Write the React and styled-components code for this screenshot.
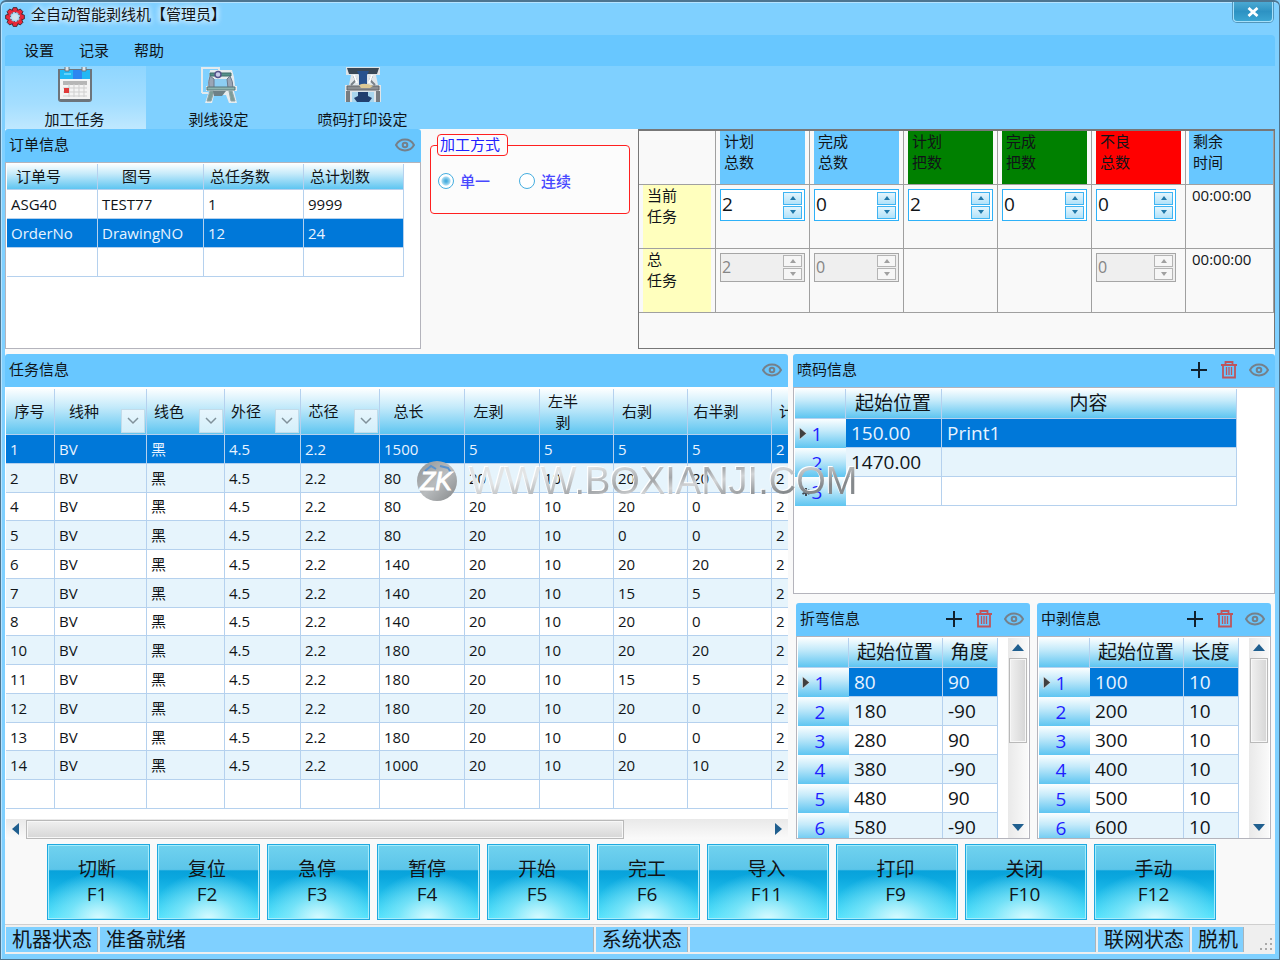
import React from "react";
import styled, { createGlobalStyle, css } from "styled-components";

const GlobalStyle = createGlobalStyle`
  * {
    box-sizing: border-box;
  }
  body {
    margin: 0;
    background: #7fd0ff;
    color: #101418;
    font-family: "Open Sans", "Noto Sans CJK SC", sans-serif;
    font-size: 15px;
    line-height: 20px;
  }
  button, input {
    font-family: inherit;
    color: inherit;
  }
`;

const Window = styled.div`
  min-height: 100vh;
  display: flex;
  flex-direction: column;
  padding: 0 4px 5px;
  background: #7fd0ff;
  border: 1px solid #4d7590;
  border-top: 2px solid #4d7590;
  border-radius: 6px 6px 0 0;
  box-shadow: inset 1px 1px 0 #b5e3ff;
  overflow: hidden;
  position: relative;
`;

const TitleBar = styled.header`
  height: 33px;
  display: flex;
  align-items: flex-start;
`;

const TitleLogo = styled.span`
  display: flex;
  padding-top: 5px;
`;

const AppTitle = styled.h1`
  flex: 1;
  margin: 2px 0 0 6px;
  font-size: 15px;
  font-weight: 400;
  text-shadow: 0 0 6px #fff, 0 0 6px #fff;
`;

const CloseButton = styled.button`
  width: 40px;
  height: 20px;
  margin-right: 2px;
  padding: 0;
  display: flex;
  align-items: center;
  justify-content: center;
  border: 1px solid #a5e0fa;
  border-top: 0;
  border-radius: 0 0 4px 4px;
  background: linear-gradient(#4ba9d2, #2d92c3 50%, #3ba5d2);
  box-shadow: 0 0 0 1px #5295ba;
`;

const MenuBar = styled.nav`
  height: 31px;
  display: flex;
  align-items: center;
  gap: 25px;
  padding: 0 0 2px 19px;
  background: #68c7ff;
  border-radius: 4px 4px 0 0;
`;

const MenuItem = styled.button`
  padding: 0;
  border: 0;
  background: none;
  font-size: 15px;
  line-height: 20px;
`;

const ToolBar = styled.div`
  height: 63px;
  display: flex;
  gap: 3px;
  background: #7fd0ff;
`;

const Tool = styled.button`
  width: 141px;
  padding: 1px 2px 0 0;
  display: flex;
  flex-direction: column;
  align-items: center;
  gap: 6px;
  border: 0;
  font-size: 15px;
  line-height: 20px;
  background: ${(props) =>
    props.$active ? "linear-gradient(#8fd6ff, #a4deff 60%, #bfe8ff)" : "none"};
`;

const Main = styled.main`
  flex: 1;
  display: flex;
  flex-direction: column;
  gap: 5px;
  background: #f9f9f9;
  padding-bottom: 3px;
`;

const TopRow = styled.div`
  height: 220px;
  display: grid;
  grid-template-columns: minmax(0, 416fr) minmax(0, 217fr) minmax(0, 637fr);
`;

const MiddleRow = styled.div`
  height: 485px;
  display: grid;
  grid-template-columns: minmax(0, 783fr) minmax(0, 482fr);
  gap: 5px;
`;

const RightColumn = styled.div`
  display: flex;
  flex-direction: column;
  gap: 9px;
  min-height: 0;
`;

const PanelPair = styled.div`
  height: 236px;
  display: grid;
  grid-template-columns: 1fr 1fr;
  gap: 7px;
  padding: 0 4px 0 3px;
`;

const PanelBox = styled.section`
  flex: 1;
  min-width: 0;
  min-height: 0;
  display: flex;
  flex-direction: column;
`;

const PanelHead = styled.div`
  height: 33px;
  flex: none;
  display: flex;
  align-items: center;
  gap: 10px;
  padding: 0 6px 1px 4px;
  background: #68c7ff;
  border-radius: 3px 3px 0 0;
`;

const PanelTitle = styled.h2`
  flex: 1;
  margin: 0;
  padding-bottom: 2px;
  font-size: 15px;
  font-weight: 400;
`;

const IconButton = styled.button`
  width: 20px;
  height: 20px;
  padding: 0;
  border: 0;
  background: none;
  display: flex;
`;

const PanelBody = styled.div`
  flex: 1;
  min-height: 0;
  display: flex;
  justify-content: space-between;
  overflow: hidden;
  background: #fff;
  border: ${(props) => (props.$plain ? "0" : "1px solid #b4b4bc")};
  padding: ${(props) => (props.$plain ? "2px 0 0 1px" : "1px 1px 0")};
  flex-direction: ${(props) => (props.$column ? "column" : "row")};
`;

const Grid = styled.table`
  flex: none;
  width: ${(props) => props.$width}px;
  height: ${(props) => (props.$height ? props.$height + "px" : "auto")};
  table-layout: fixed;
  border-spacing: 0;
  align-self: flex-start;
  font-size: ${(props) => (props.$large ? "19px" : "15px")};
`;

const Col = styled.col`
  width: ${(props) => props.$width}px;
`;

const headFill = css`
  background: linear-gradient(#fbfeff, #c4eafa 40%, #5ec5f1);
`;

const HeadCell = styled.th`
  height: ${(props) => props.$height}px;
  padding: 0;
  font-weight: 400;
  border-right: 1px solid #b5d1ee;
  border-bottom: 1px solid #b5d1ee;
  ${headFill}
`;

const HeadInner = styled.div`
  height: 100%;
  display: flex;
  align-items: center;
`;

const HeadText = styled.span`
  flex: 1;
  text-align: ${(props) => (props.$left ? "left" : "center")};
  padding: ${(props) => (props.$left ? "0 0 0 7px" : "0 2px")};
  white-space: ${(props) => (props.$nowrap ? "nowrap" : "normal")};
  line-height: 21px;
`;

const HeadSlot = styled.span`
  flex: none;
  width: ${(props) => props.$width}px;
  align-self: flex-end;
  display: flex;
  justify-content: flex-end;
  padding: 0 1px 1px 0;
`;

const FilterButton = styled.button`
  width: 24px;
  height: 24px;
  padding: 0;
  display: flex;
  align-items: center;
  justify-content: center;
  border: 1px solid #c3dcea;
  background: linear-gradient(#e8f6fd, #d3effa);
`;

const Row = styled.tr`
  background: #fff;
  ${(props) => props.$alt && "background: #e6f4fc;"}
  ${(props) => props.$selected && "background: #0078d9; color: #e8f3ff;"}
`;

const Cell = styled.td`
  height: ${(props) => (props.$flexible ? "auto" : "29px")};
  padding: ${(props) => (props.$large ? "0 4px 0 5px" : "0 4px")};
  white-space: nowrap;
  border-right: 1px solid #b5d1ee;
  border-bottom: 1px solid #b5d1ee;
`;

const RowHead = styled.th`
  position: relative;
  padding: 0 7px 0 0;
  font-weight: 400;
  color: #1f1fff;
  ${headFill}
`;

const RowMark = styled.svg`
  position: absolute;
  left: 4px;
  top: 8px;
`;

const ScrollTrack = styled.div`
  flex: none;
  display: flex;
  align-items: center;
  flex-direction: ${(props) => (props.$vertical ? "column" : "row")};
  ${(props) =>
    props.$vertical
      ? "width: 20px; background: linear-gradient(90deg, #e9e9e9, #fafafa);"
      : "height: 20px; background: linear-gradient(#e9e9e9, #fafafa);"}
`;

const ScrollArrow = styled.button`
  width: 20px;
  height: 20px;
  flex: none;
  padding: 0;
  border: 0;
  background: none;
  display: flex;
  align-items: center;
  justify-content: center;
`;

const ScrollThumb = styled.div`
  border: 1px solid #b9b9b9;
  box-shadow: inset 0 0 0 1px #f7f7f7;
  ${(props) =>
    props.$vertical
      ? "width: 18px; height: 85px; background: linear-gradient(90deg, #f0f0f0, #d6d6d6);"
      : "width: 598px; height: 19px; background: linear-gradient(#f0f0f0, #d6d6d6);"}
`;

const ScrollSpace = styled.div`
  flex: 1;
`;

const ModeArea = styled.div`
  padding: 5px 8px 0 9px;
`;

const ModeGroup = styled.fieldset`
  height: 80px;
  margin: 0;
  padding: 13px 6px 0 6px;
  border: 1px solid #ff2020;
  border-radius: 4px;
  background: #fcfcfc;
`;

const ModeLegend = styled.legend`
  margin: 0;
  height: 22px;
  padding: 0 7px 0 2px;
  line-height: 18px;
  color: #2020ff;
  background: #fcfcfc;
  border: 1px solid #ff2020;
  border-radius: 4px;
`;

const ModeOptions = styled.div`
  display: flex;
  gap: 29px;
  padding-left: 1px;
`;

const ModeLabel = styled.label`
  display: flex;
  align-items: center;
  gap: 6px;
  line-height: 24px;
  font-weight: 500;
  color: #4848ff;
`;

const Radio = styled.input`
  appearance: none;
  width: 16px;
  height: 16px;
  margin: 0;
  border: 1px solid #45aee0;
  border-radius: 50%;
  background: #fff;
  &:checked {
    background: radial-gradient(circle, #4aaede 1px, #a5d9f1 4px, #fff 5px);
  }
`;

const StatsBox = styled.section`
  border: 1px solid #777;
  border-top-width: 2px;
`;

const StatsTable = styled.table`
  width: 100%;
  table-layout: fixed;
  border-spacing: 0;
`;

const StatsCell = styled.td`
  height: ${(props) => (props.$head ? "54px" : "64px")};
  padding: ${(props) => (props.$last ? "0 0 0 3px" : "0 4px")};
  vertical-align: top;
  text-align: left;
  font-weight: 400;
  border-right: 1px solid #a0a0a0;
  border-bottom: 1px solid #a0a0a0;
`;

const StatsLabel = styled.div`
  height: ${(props) => (props.$short ? "53px" : "63px")};
  padding: 0 3px 0 4px;
  line-height: 21px;
  white-space: pre-line;
  background: ${(props) => props.$color};
`;

const StatsTime = styled.div`
  padding-left: 3px;
  line-height: 20px;
`;

const SpinBox = styled.div`
  display: flex;
  align-items: center;
  width: ${(props) => (props.$narrow ? "80px" : "100%")};
  height: ${(props) => (props.$disabled ? "29px" : "32px")};
  margin-top: 4px;
  padding: 1px 2px 1px 0;
  border: 1px solid ${(props) => (props.$disabled ? "#a6a6a6" : "#2eb1f8")};
  background: ${(props) => (props.$disabled ? "#efefef" : "#fff")};
`;

const SpinInput = styled.input`
  flex: 1;
  min-width: 0;
  height: 100%;
  padding: 0 0 2px 1px;
  border: 0;
  background: none;
  font-size: 19px;
  &:disabled {
    font-size: 16px;
    color: #858585;
  }
`;

const SpinButtons = styled.div`
  display: flex;
  flex-direction: column;
  gap: 1px;
`;

const SpinButton = styled.button`
  width: 19px;
  height: ${(props) => (props.disabled ? "12px" : "13px")};
  padding: 0;
  display: flex;
  align-items: center;
  justify-content: center;
  border: 1px solid ${(props) => (props.disabled ? "#b4b4b4" : "#3fb4f2")};
  color: ${(props) => (props.disabled ? "#a0a0a0" : "#2077a8")};
  background: ${(props) =>
    props.disabled ? "#f6f6f6" : "linear-gradient(#e4f5fd, #b2e2f9)"};
`;

const ActionBar = styled.div`
  display: flex;
  gap: 7px;
  padding-left: 42px;
`;

const ActionButton = styled.button`
  width: ${(props) => (props.$wide ? "122px" : "103px")};
  height: 76px;
  padding: 0 3px 0 0;
  border: 1px solid #1fa9e0;
  box-shadow: inset 0 0 0 1px #a5ecfb;
  font-size: 19px;
  line-height: 25px;
  background: radial-gradient(
      ellipse 58% 64% at 50% 100%,
      #d9fbff,
      rgba(150, 236, 250, 0.65) 50%,
      rgba(80, 215, 245, 0) 100%
    ),
    linear-gradient(
      #70d2ef,
      #5cc5e9 33%,
      #08a2db 35%,
      #0ba8df 45%,
      #46e2fd 100%
    );
`;

const StatusBar = styled.footer`
  height: 30px;
  display: flex;
  gap: 2px;
  padding: 2px 1px;
  background: #efefef;
  border-top: 1px solid #cfcfcf;
`;

const StatusItem = styled.span`
  flex: ${(props) => props.$grow || "none"};
  padding: 0 5px 0 6px;
  font-size: 20px;
  line-height: 26px;
  white-space: nowrap;
  background: #7fd0ff;
  border-right: 1px solid #a9b4bb;
`;

const StatusGrip = styled.span`
  width: 28px;
  display: flex;
  align-items: flex-end;
  justify-content: flex-end;
`;

const Watermark = styled.div`
  position: absolute;
  left: 32%;
  top: 458px;
  display: flex;
  align-items: center;
  gap: 11px;
  margin-left: 6px;
  pointer-events: none;
`;

const WatermarkText = styled.span`
  font-family: "Liberation Sans", sans-serif;
  font-size: 38px;
  line-height: 42px;
  color: transparent;
  background: linear-gradient(170deg, #e2e4e5 25%, #a3a6a9 48%, #d2d4d6 58%, #85898c 80%);
  background-clip: text;
  filter: drop-shadow(-1px -1px 0 #fff);
`;

const GearIcon = () => (
  <svg width="20" height="20" viewBox="0 0 20 20">
    <g fill="#e8283a" stroke="#30222a" strokeWidth="0.8">
      {[0, 45, 90, 135, 180, 225, 270, 315].map((angle) => (
        <path
          key={angle}
          d="M6.500 5 L8.200 .6 L11.800 .6 L13.500 5Z"
          transform={`rotate(${angle} 10 10)`}
        />
      ))}
    </g>
    <circle cx="10" cy="10" r="6" fill="#a9dcf8" stroke="#e8283a" strokeWidth="2" />
    <circle cx="10" cy="10" r="4.600" fill="none" stroke="#503040" strokeWidth="1" strokeDasharray="1.500 2" />
    <circle cx="10" cy="10" r="3" fill="#cfe3ee" />
  </svg>
);

const CalendarIcon = () => (
  <svg width="36" height="36" viewBox="0 0 36 36">
    <path d="M1 2h34v30q0 3-3 3H4q-3 0-3-3z" fill="#6d747b" />
    <path d="M3 11h30v21H3z" fill="#f4f4f4" />
    <path d="M3 3h30v9H3z" fill="#22b8f4" />
    <path d="M16 3h9v9h-9z" fill="#2d86f0" />
    <path d="M7 7h7" stroke="#7adcff" strokeWidth="1.5" />
    <path d="M8 0v4h4V0M25 0v4h4V0" fill="#dfe5ea" stroke="#69757f" />
    <path d="M6 14h24v4H6z" fill="#b6b6b6" />
    <path d="M12 17v13M17 17v13M22 17v13M27 17v13M6 21h24M6 25h24M6 29h24" stroke="#cfcfcf" />
    <path d="M7 21h5v5H7z" fill="#e03a3a" />
  </svg>
);

const StripIcon = () => (
  <svg width="36" height="36" viewBox="0 0 36 36">
    <path d="M1 26V1h17v3M1 26h6" fill="none" stroke="#e3eaee" strokeWidth="2" />
    <path
      d="M9 3h22l2 7 1 9h2v5h-3l3 12h-8l-3-8H13l-2 8H4l4-12H5v-5h2l1-10z"
      fill="#e6ecef"
    />
    <path d="M13 12h14v8H13z" fill="#8ccdf2" />
    <path d="M9 6h21v3H9z" fill="#55918a" stroke="#3f6d6b" />
    <path d="M9 9q-2 5-1 12h5V12zM29 9q3 5 3 12h-5l-1-9z" fill="#9aa5b5" stroke="#6c798b" />
    <circle cx="17" cy="7.500" r="3" fill="#c9cde9" stroke="#56538a" strokeWidth="1.500" />
    <path d="M6 20h28v3H6z" fill="#8fb5b0" stroke="#56777a" />
    <path d="M9 24l-3 10h4l3-10zM28 24l2 10h4l-3-10z" fill="#7d9c98" stroke="#8fa3a6" />
    <path d="M12 24h13l-4 5h-8z" fill="#6d8087" />
  </svg>
);

const PrinterIcon = () => (
  <svg width="36" height="36" viewBox="0 0 36 36">
    <path d="M1 0h34v8h-4l2 10h3v17h-7V25H7v10H0V18h4L6 8H1z" fill="#dfe5e9" />
    <path d="M2 1h32l-2 6H4z" fill="#3a4856" />
    <path d="M12 4h12l-2 4v10h-8V8z" fill="#28528e" />
    <path d="M9 9l2 4-5 5M27 9l-2 4 5 5" fill="none" stroke="#7a8289" strokeWidth="2" />
    <path d="M9 8l3 8M27 8l-3 8" stroke="#fff" strokeWidth="2" />
    <path d="M2 19h32v4H2z" fill="#8b8e91" stroke="#626568" />
    <path d="M14 18q6-3 14 1l-3 2h-9z" fill="#dcc995" />
    <path d="M1 24h4v11H1zM31 24h4v11h-4z" fill="#777c81" />
    <path d="M7 25h22v10H7z" fill="#a9d6ee" />
    <path d="M13 25h10v4l4 2-3 4H12l-3-4 4-2z" fill="#223f6e" />
  </svg>
);

const EyeIcon = () => (
  <svg width="20" height="20" viewBox="0 0 20 20" fill="none" stroke="#75808a" strokeWidth="2">
    <path d="M1 10C3 6.400 6.200 4.600 10 4.600S17 6.400 19 10c-2 3.600-5.200 5.400-9 5.400S3 13.600 1 10z" />
    <circle cx="10" cy="10" r="2.300" />
  </svg>
);

const TrashIcon = () => (
  <svg width="20" height="20" viewBox="0 0 20 20" fill="none" stroke="#bd555c" strokeWidth="1.800">
    <path d="M2 5h16M6.500 5V2h7v3M4 5v12.500h12V5" />
    <path d="M7.500 7v8M10 7v8M12.500 7v8" strokeWidth="1.300" />
  </svg>
);

const PlusIcon = () => (
  <svg width="20" height="20" viewBox="0 0 20 20" stroke="#10202c" strokeWidth="2">
    <path d="M2 10h16M10 2v16" />
  </svg>
);

const arrows = {
  left: "M8 0v12L1 6z",
  right: "M2 0v12l7-6z",
  up: "M5 2l6 7H-1z",
  down: "M5 9l6-7H-1z",
};

const Arrow = ({ direction }) => (
  <svg width="12" height="12" viewBox="-1 0 12 12">
    <path d={arrows[direction]} fill="#205f8f" />
  </svg>
);

const taskColumns = [
  { title: "序号", width: 49, slot: 0 },
  { title: "线种", width: 92, slot: 33, filter: true },
  { title: "线色", width: 78, slot: 33, filter: true },
  { title: "外径", width: 76, slot: 33, filter: true },
  { title: "芯径", width: 79, slot: 33, filter: true },
  { title: "总长", width: 85, slot: 27 },
  { title: "左剥", width: 75, slot: 27 },
  { title: "左半剥", width: 74, slot: 27 },
  { title: "右剥", width: 74, slot: 27 },
  { title: "右半剥", width: 84, slot: 27 },
  { title: "计", width: 60, slot: 0, left: true },
];

const taskRows = [
  ["1", "1500", "5", "5", "5", "5"],
  ["2", "80", "20", "10", "20", "20"],
  ["4", "80", "20", "10", "20", "0"],
  ["5", "80", "20", "10", "0", "0"],
  ["6", "140", "20", "10", "20", "20"],
  ["7", "140", "20", "10", "15", "5"],
  ["8", "140", "20", "10", "20", "0"],
  ["10", "180", "20", "10", "20", "20"],
  ["11", "180", "20", "10", "15", "5"],
  ["12", "180", "20", "10", "20", "0"],
  ["13", "180", "20", "10", "0", "0"],
  ["14", "1000", "20", "10", "20", "10"],
].map(([no, ...rest]) => [no, "BV", "黑", "4.5", "2.2", ...rest, "2"]);

const orderColumns = [
  { title: "订单号", width: 91, slot: 27, nowrap: true },
  { title: "图号", width: 106, slot: 27 },
  { title: "总任务数", width: 100, slot: 27, nowrap: true },
  { title: "总计划数", width: 100, slot: 27, nowrap: true },
];

const orderRows = [
  ["ASG40", "TEST77", "1", "9999"],
  ["OrderNo", "DrawingNO", "12", "24"],
  ["", "", "", ""],
];

const printColumns = [
  { title: "起始位置", width: 96, slot: 0 },
  { title: "内容", width: 295, slot: 0 },
];

const bendColumns = [
  { title: "起始位置", width: 94, slot: 0 },
  { title: "角度", width: 55, slot: 0 },
];

const middleColumns = [
  { title: "起始位置", width: 94, slot: 0 },
  { title: "长度", width: 55, slot: 0 },
];

const stats = [
  { title: "计划\n总数", color: "#68c7ff", now: "2", total: "2" },
  { title: "完成\n总数", color: "#68c7ff", now: "0", total: "0" },
  { title: "计划\n把数", color: "#008000", now: "2" },
  { title: "完成\n把数", color: "#008000", now: "0" },
  { title: "不良\n总数", color: "#ff0000", now: "0", total: "0", narrow: true },
];

const actions = [
  ["切断", "F1"],
  ["复位", "F2"],
  ["急停", "F3"],
  ["暂停", "F4"],
  ["开始", "F5"],
  ["完工", "F6"],
  ["导入", "F11", true],
  ["打印", "F9", true],
  ["关闭", "F10", true],
  ["手动", "F12", true],
];

const DataGrid = ({
  columns,
  rows,
  selected = 0,
  headHeight = 30,
  height,
  large,
  numbered,
  newRow,
  striped = true,
}) => {
  const width = columns.reduce((sum, c) => sum + c.width, numbered ? 51 : 0);
  return (
    <Grid $width={width} $height={height} $large={large}>
      <colgroup>
        {numbered && <Col $width={51} />}
        {columns.map((c) => (
          <Col key={c.title} $width={c.width} />
        ))}
      </colgroup>
      <thead>
        <tr>
          {numbered && <HeadCell $height={headHeight} />}
          {columns.map((c) => (
            <HeadCell key={c.title} $height={headHeight} scope="col">
              <HeadInner>
                <HeadText $left={c.left} $nowrap={c.nowrap}>
                  {c.title}
                </HeadText>
                <HeadSlot $width={c.slot}>
                  {c.filter && (
                    <FilterButton aria-label={c.title}>
                      <svg width="12" height="8" viewBox="0 0 12 8">
                        <path d="M1 1l5 5 5-5" fill="none" stroke="#80919a" strokeWidth="1.500" />
                      </svg>
                    </FilterButton>
                  )}
                </HeadSlot>
              </HeadInner>
            </HeadCell>
          ))}
        </tr>
      </thead>
      <tbody>
        {rows.map((row, i) => (
          <Row key={i} $selected={i === selected} $alt={striped && i % 2 === 1}>
            {numbered && (
              <RowHead scope="row">
                {i === selected && (
                  <RowMark width="8" height="13" viewBox="0 0 8 13">
                    <path d="M.5 .5v12l7-6z" fill="#404040" stroke="#fff" strokeWidth=".5" />
                  </RowMark>
                )}
                {newRow === i && (
                  <RowMark width="14" height="14" viewBox="0 0 14 14">
                    <path d="M7 3v8M3.500 5l7 4M10.500 5l-7 4" stroke="#404850" strokeWidth="2" />
                  </RowMark>
                )}
                {i + 1}
              </RowHead>
            )}
            {row.map((value, j) => (
              <Cell key={j} $flexible={!!height} $large={large}>
                {value || "\u00a0"}
              </Cell>
            ))}
          </Row>
        ))}
      </tbody>
    </Grid>
  );
};

const Panel = ({ title, editable, plain, column, children }) => (
  <PanelBox>
    <PanelHead>
      <PanelTitle>{title}</PanelTitle>
      {editable && (
        <>
          <IconButton aria-label="添加">
            <PlusIcon />
          </IconButton>
          <IconButton aria-label="删除">
            <TrashIcon />
          </IconButton>
        </>
      )}
      <IconButton aria-label="显示">
        <EyeIcon />
      </IconButton>
    </PanelHead>
    <PanelBody $plain={plain} $column={column}>
      {children}
    </PanelBody>
  </PanelBox>
);

const ScrollBar = ({ vertical }) => (
  <ScrollTrack $vertical={vertical}>
    <ScrollArrow aria-label={vertical ? "向上" : "向左"}>
      <Arrow direction={vertical ? "up" : "left"} />
    </ScrollArrow>
    <ScrollThumb $vertical={vertical} />
    <ScrollSpace />
    <ScrollArrow aria-label={vertical ? "向下" : "向右"}>
      <Arrow direction={vertical ? "down" : "right"} />
    </ScrollArrow>
  </ScrollTrack>
);

const Spin = ({ label, value, disabled, narrow }) => (
  <SpinBox $disabled={disabled} $narrow={narrow}>
    <SpinInput aria-label={label} defaultValue={value} disabled={disabled} />
    <SpinButtons>
      <SpinButton aria-label="增加" disabled={disabled}>
        <svg width="6" height="4" viewBox="0 0 6 4">
          <path d="M3 0l3 4H0z" fill="currentColor" />
        </svg>
      </SpinButton>
      <SpinButton aria-label="减少" disabled={disabled}>
        <svg width="6" height="4" viewBox="0 0 6 4">
          <path d="M3 4l3-4H0z" fill="currentColor" />
        </svg>
      </SpinButton>
    </SpinButtons>
  </SpinBox>
);

const Stats = () => (
  <StatsBox>
    <StatsTable>
      <colgroup>
        <Col $width={77} />
        {stats.map((s) => (
          <Col key={s.title} $width={94} />
        ))}
        <col />
      </colgroup>
      <tbody>
        <tr>
          <StatsCell $head />
          {stats.map((s) => (
            <StatsCell as="th" $head key={s.title} scope="col">
              <StatsLabel $short $color={s.color}>
                {s.title}
              </StatsLabel>
            </StatsCell>
          ))}
          <StatsCell as="th" $head $last scope="col">
            <StatsLabel $short $color="#68c7ff">
              {"剩余\n时间"}
            </StatsLabel>
          </StatsCell>
        </tr>
        <tr>
          <StatsCell as="th" scope="row">
            <StatsLabel $color="#ffffbe">{"当前\n任务"}</StatsLabel>
          </StatsCell>
          {stats.map((s) => (
            <StatsCell key={s.title}>
              <Spin label={s.title} value={s.now} narrow={s.narrow} />
            </StatsCell>
          ))}
          <StatsCell $last>
            <StatsTime>00:00:00</StatsTime>
          </StatsCell>
        </tr>
        <tr>
          <StatsCell as="th" scope="row">
            <StatsLabel $color="#ffffbe">{"总\n任务"}</StatsLabel>
          </StatsCell>
          {stats.map((s) => (
            <StatsCell key={s.title}>
              {s.total && <Spin label={s.title} value={s.total} narrow={s.narrow} disabled />}
            </StatsCell>
          ))}
          <StatsCell $last>
            <StatsTime>00:00:00</StatsTime>
          </StatsCell>
        </tr>
      </tbody>
    </StatsTable>
  </StatsBox>
);

const App = () => {
  return (
    <Window>
      <GlobalStyle />
      <TitleBar>
        <TitleLogo>
          <GearIcon />
        </TitleLogo>
        <AppTitle>全自动智能剥线机【管理员】</AppTitle>
        <CloseButton aria-label="关闭窗口">
          <svg width="12" height="10" viewBox="0 0 12 10">
            <path d="M1.500 1l9 8M10.500 1l-9 8" stroke="#fff" strokeWidth="2.800" />
          </svg>
        </CloseButton>
      </TitleBar>
      <MenuBar>
        <MenuItem>设置</MenuItem>
        <MenuItem>记录</MenuItem>
        <MenuItem>帮助</MenuItem>
      </MenuBar>
      <ToolBar>
        <Tool $active>
          <CalendarIcon />
          加工任务
        </Tool>
        <Tool>
          <StripIcon />
          剥线设定
        </Tool>
        <Tool>
          <PrinterIcon />
          喷码打印设定
        </Tool>
      </ToolBar>

      <Main>
        <TopRow>
          <Panel title="订单信息">
            <DataGrid
              columns={orderColumns}
              rows={orderRows}
              selected={1}
              headHeight={26}
              striped={false}
            />
          </Panel>
          <ModeArea>
            <ModeGroup>
              <ModeLegend>加工方式</ModeLegend>
              <ModeOptions>
                <ModeLabel>
                  <Radio type="radio" name="mode" defaultChecked />
                  单一
                </ModeLabel>
                <ModeLabel>
                  <Radio type="radio" name="mode" />
                  连续
                </ModeLabel>
              </ModeOptions>
            </ModeGroup>
          </ModeArea>
          <Stats />
        </TopRow>

        <MiddleRow>
          <Panel title="任务信息" plain column>
            <DataGrid
              columns={taskColumns}
              rows={[...taskRows, Array(11).fill("")]}
              headHeight={46}
              height={420}
            />
            <ScrollBar />
          </Panel>
          <RightColumn>
            <Panel title="喷码信息" editable>
              <DataGrid
                columns={printColumns}
                rows={[
                  ["150.00", "Print1"],
                  ["1470.00", ""],
                  ["", ""],
                ]}
                newRow={2}
                large
                numbered
              />
            </Panel>
            <PanelPair>
              <Panel title="折弯信息" editable>
                <DataGrid
                  columns={bendColumns}
                  rows={[80, 180, 280, 380, 480, 580].map((start, i) => [
                    start,
                    i % 2 ? "-90" : "90",
                  ])}
                  large
                  numbered
                />
                <ScrollBar vertical />
              </Panel>
              <Panel title="中剥信息" editable>
                <DataGrid
                  columns={middleColumns}
                  rows={[100, 200, 300, 400, 500, 600].map((start) => [start, "10"])}
                  large
                  numbered
                />
                <ScrollBar vertical />
              </Panel>
            </PanelPair>
          </RightColumn>
        </MiddleRow>

        <ActionBar>
          {actions.map(([name, key, wide]) => (
            <ActionButton key={key} $wide={wide}>
              {name}
              <br />
              {key}
            </ActionButton>
          ))}
        </ActionBar>
      </Main>

      <StatusBar>
        <StatusItem>机器状态</StatusItem>
        <StatusItem $grow="496 1 0">准备就绪</StatusItem>
        <StatusItem>系统状态</StatusItem>
        <StatusItem $grow="406 1 0" />
        <StatusItem>联网状态</StatusItem>
        <StatusItem>脱机</StatusItem>
        <StatusGrip>
          <svg width="14" height="14" viewBox="0 0 14 14" fill="#a9a9a9">
            <path d="M10 0h2v2h-2zM10 5h2v2h-2zM10 10h2v2h-2zM5 5h2v2H5zM5 10h2v2H5zM0 10h2v2H0z" />
          </svg>
        </StatusGrip>
      </StatusBar>

      <Watermark>
        <svg width="42" height="42" viewBox="0 0 42 42">
          <defs>
            <linearGradient id="badge" x1="0" y1="0" x2="1" y2="1">
              <stop offset="0" stopColor="#8e9193" />
              <stop offset="0.5" stopColor="#b9bcbe" />
              <stop offset="1" stopColor="#85888a" />
            </linearGradient>
          </defs>
          <circle cx="21" cy="21" r="20" fill="url(#badge)" />
          <path d="M9 11l6-5 5 3M24 6l8 2 4 6" fill="none" stroke="#5c92cc" strokeWidth="2" />
          <text
            x="20"
            y="30"
            textAnchor="middle"
            fontFamily="Liberation Sans, sans-serif"
            fontSize="25"
            fontStyle="italic"
            fill="#fff"
            stroke="#fff"
          >
            ZK
          </text>
        </svg>
        <WatermarkText>WWW.BOXIANJI.COM</WatermarkText>
      </Watermark>
    </Window>
  );
};

export default App;
